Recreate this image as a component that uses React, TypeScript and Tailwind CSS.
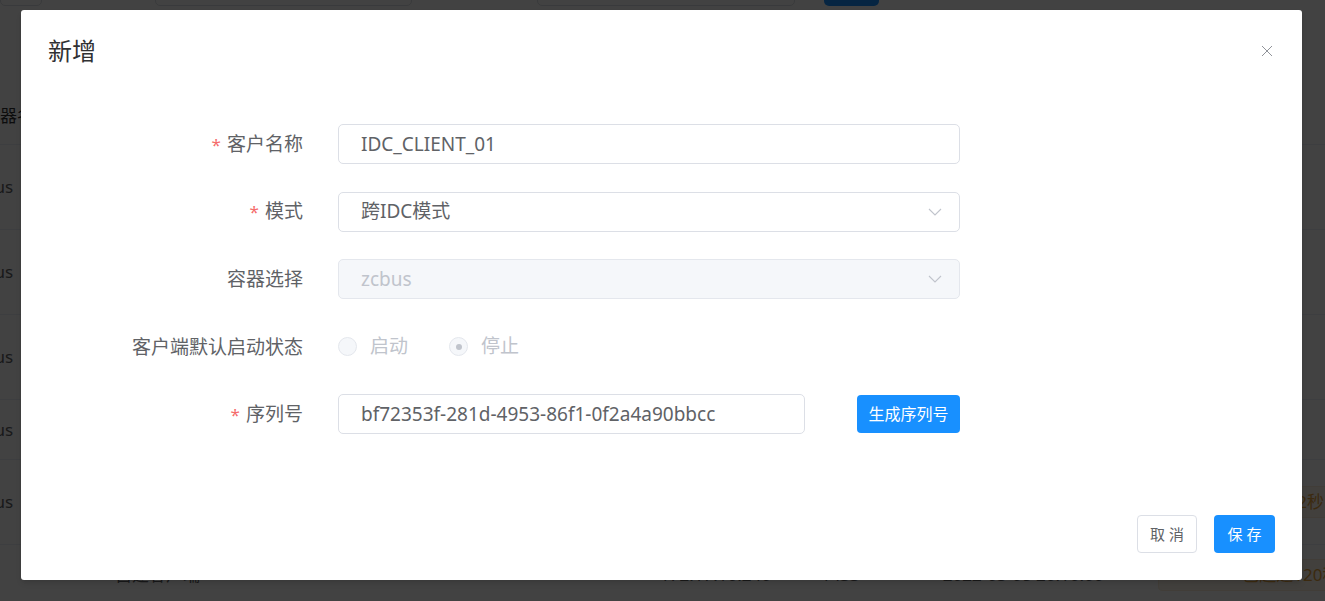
import React from 'react';

const ROWS = [
    { h: 'h-[85px]', name: 'zcbus' },
    { h: 'h-[85px]', name: 'zcbus' },
    { h: 'h-[85px]', name: 'zcbus' },
    { h: 'h-[60px]', name: 'zcbus' },
    { h: 'h-[85px]', name: 'zcbus', tag: true },
];

function Required() {
    return <span className="text-[#f56c6c] text-[17px] mr-[6px]">*</span>;
}

function Label({ required, children }: { required?: boolean; children: React.ReactNode }) {
    return (
        <div className="w-[199px] shrink-0 text-right text-[19px] leading-10 text-[#606266]">
            {required && <Required />}
            {children}
        </div>
    );
}

function Chevron() {
    return (
        <svg width="14" height="8" viewBox="0 0 14 8" className="shrink-0">
            <path d="M1 1l6 6 6-6" stroke="#c0c4cc" strokeWidth="1.1" fill="none" />
        </svg>
    );
}

function Radio({ label, checked }: { label: string; checked?: boolean }) {
    return (
        <div className="flex items-center mr-[41px]">
            <span className="w-[19px] h-[19px] rounded-full border border-[#e4e7ed] bg-[#f5f7fa] flex items-center justify-center">
                {checked && <span className="w-[6px] h-[6px] rounded-full bg-[#c0c4cc]" />}
            </span>
            <span className="ml-[13px] text-[19px] text-[#c0c4cc]">{label}</span>
        </div>
    );
}

// dimmed page behind the dialog
function Backdrop() {
    return (
        <div className="w-full h-[601px] bg-white overflow-hidden text-[17px] text-[#606266] whitespace-nowrap">
            <div className="flex items-end h-[6px]">
                <div className="w-[42px] h-[36px] border border-[#dcdfe6] rounded-[5px] shrink-0" />
                <div className="ml-[113px] w-[257px] h-[36px] border border-[#dcdfe6] rounded-[5px] shrink-0" />
                <div className="ml-[125px] w-[258px] h-[36px] border border-[#dcdfe6] rounded-[5px] shrink-0" />
                <div className="ml-[29px] w-[55px] h-[36px] bg-[#1890ff] rounded-[5px] shrink-0" />
            </div>
            <div className="h-[139px] border-b border-[#ebeef5] flex items-end pb-[16px]">
                <span className="-ml-[17px] text-[#303133]">容器名称</span>
            </div>
            {ROWS.map((r, i) => (
                <div key={i} className={`${r.h} border-b border-[#ebeef5] flex items-center`}>
                    <span className="-ml-[32px]">{r.name}</span>
                    {r.tag && (
                        <div className="ml-auto mr-[-40px] w-[220px] h-[32px] bg-[#fdf6ec] border border-[#faecd8] rounded-[4px] flex items-center justify-end pr-[40px] text-[#e6a23c] shrink-0">
                            已超过2秒
                        </div>
                    )}
                </div>
            ))}
            <div className="h-[60px] flex items-center">
                <span className="ml-[115px] shrink-0">自建客户端</span>
                <span className="ml-[460px] shrink-0">172.17.10.240</span>
                <span className="ml-[50px] shrink-0">1433</span>
                <span className="ml-[83px] shrink-0">2022-03-08 20:10:00</span>
                <div className="ml-[55px] w-[220px] h-[32px] bg-[#fdf6ec] border border-[#faecd8] rounded-[4px] flex items-center justify-end pr-[38px] text-[#e6a23c] shrink-0">
                    已超过120秒
                </div>
            </div>
        </div>
    );
}

export default function App() {
    return (
        <div className='relative w-[1325px] h-[601px] overflow-hidden font-["Noto_Sans","Noto_Sans_CJK_SC",sans-serif]'>
            <Backdrop />

            {/* overlay + dialog */}
            <div className="absolute inset-0 bg-black/[0.74]">
                <div className="mt-[10px] ml-[21px] w-[1281px] h-[570px] bg-white rounded-[3px] shadow-md flex flex-col">
                    {/* header */}
                    <div className="flex items-center justify-between pt-[25px] pl-[27px] pr-[29px]">
                        <span className="text-[24px] leading-[32px] text-[#303133]">新增</span>
                        <svg width="12" height="12" viewBox="0 0 12 12">
                            <path d="M1 1l10 10M11 1L1 11" stroke="#909399" strokeWidth="1" />
                        </svg>
                    </div>

                    {/* form */}
                    <div className="pt-[57px] pl-[83px] flex flex-col gap-[27.5px]">
                        <div className="flex items-center h-10">
                            <Label required>客户名称</Label>
                            <div className="ml-[35px] w-[622px] h-10 border border-[#dcdfe6] rounded-[5px] flex items-center pl-[22px] text-[19px] text-[#606266]">
                                IDC_CLIENT_01
                            </div>
                        </div>
                        <div className="flex items-center h-10">
                            <Label required>模式</Label>
                            <div className="ml-[35px] w-[622px] h-10 border border-[#dcdfe6] rounded-[5px] flex items-center justify-between pl-[22px] pr-[17px] text-[19px] text-[#606266]">
                                <span>跨IDC模式</span>
                                <Chevron />
                            </div>
                        </div>
                        <div className="flex items-center h-10">
                            <Label>容器选择</Label>
                            <div className="ml-[35px] w-[622px] h-10 border border-[#e4e7ed] bg-[#f5f7fa] rounded-[5px] flex items-center justify-between pl-[22px] pr-[17px] text-[19px] text-[#c0c4cc]">
                                <span>zcbus</span>
                                <Chevron />
                            </div>
                        </div>
                        <div className="flex items-center h-10">
                            <Label>客户端默认启动状态</Label>
                            <div className="ml-[35px] flex items-center">
                                <Radio label="启动" />
                                <Radio label="停止" checked />
                            </div>
                        </div>
                        <div className="flex items-center h-10">
                            <Label required>序列号</Label>
                            <div className="ml-[35px] w-[467px] h-10 border border-[#dcdfe6] rounded-[5px] flex items-center pl-[22px] text-[19px] text-[#606266]">
                                bf72353f-281d-4953-86f1-0f2a4a90bbcc
                            </div>
                            <button className="ml-[52px] w-[103px] h-[38px] bg-[#1890ff] rounded-[4px] text-white text-[16px]">
                                生成序列号
                            </button>
                        </div>
                    </div>

                    {/* footer */}
                    <div className="mt-auto flex justify-end gap-[17px] pr-[27px] pb-[27px]">
                        <button className="w-[60px] h-[38px] border border-[#dcdfe6] bg-white rounded-[4px] text-[15px] text-[#606266]">
                            取 消
                        </button>
                        <button className="w-[61px] h-[38px] bg-[#1890ff] rounded-[4px] text-[15px] text-white">
                            保 存
                        </button>
                    </div>
                </div>
            </div>
        </div>
    );
}
